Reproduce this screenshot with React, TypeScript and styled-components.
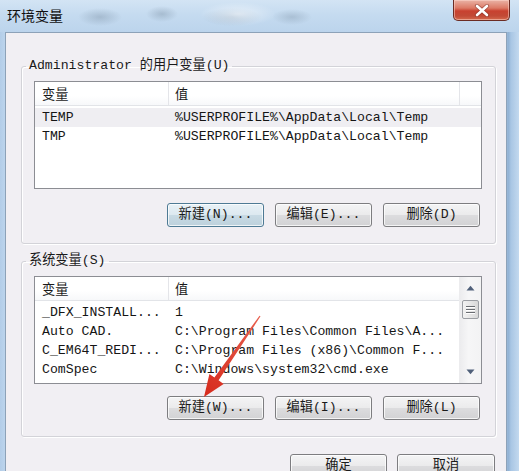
import React from 'react';
import styled, { createGlobalStyle } from 'styled-components';

const MONO = `"Liberation Mono", "Noto Sans CJK SC", monospace`;
const CJK = `"Noto Sans CJK SC", "Liberation Mono", sans-serif`;

const Global = createGlobalStyle`
  html, body { margin: 0; padding: 0; width: 519px; height: 471px; overflow: hidden; background: #fff; }
  #root { width: 519px; height: 471px; }
  * { box-sizing: border-box; }
`;

const Win = styled.div`
  position: relative;
  width: 519px;
  height: 471px;
  overflow: hidden;
  display: flex;
  flex-direction: column;
  background: linear-gradient(90deg, #b3cde8 0px, #bcd4ec 5px, #bcd4ec 505px, #8fb0d2 508px, #a9c6e4 511px, #c3d9ef 519px);
`;

const TitleBar = styled.div`
  height: 32px;
  flex: none;
  display: flex;
  align-items: flex-start;
  justify-content: space-between;
  padding: 0 9px 0 7px;
  background:
    radial-gradient(ellipse 22px 9px at 100px 17px, rgba(110, 130, 150, 0.35), transparent),
    radial-gradient(ellipse 16px 8px at 162px 14px, rgba(110, 130, 150, 0.35), transparent),
    radial-gradient(ellipse 38px 12px at 238px 14px, rgba(255, 255, 255, 0.55), transparent),
    radial-gradient(ellipse 30px 9px at 232px 17px, rgba(110, 130, 150, 0.3), transparent),
    radial-gradient(ellipse 20px 8px at 292px 17px, rgba(110, 130, 150, 0.3), transparent),
    linear-gradient(180deg, #d3e4f4 0%, #c5dbf0 45%, #bcd4ec 100%);
`;

const Title = styled.div`
  font: 14px/30px ${CJK};
  color: #111;
`;

const CloseBtn = styled.div`
  width: 57px;
  height: 21px;
  display: flex;
  align-items: center;
  justify-content: center;
  border: 1px solid #6b2c24;
  border-top: none;
  border-radius: 0 0 5px 5px;
  background: linear-gradient(180deg, #eab3a6 0%, #dc7a66 40%, #c8412f 55%, #c24a36 80%, #d46a4d 100%);
  box-shadow: inset 0 0 0 1px rgba(255, 220, 210, 0.5);
`;

const Client = styled.div`
  flex: 1;
  margin: 0 12px 0 5px;
  border: 1px solid #8da2b8;
  border-bottom: none;
  background: #f1eff3;
  display: flex;
  flex-direction: column;
  padding: 0 10px 0 15px;
`;

const Group = styled.fieldset<{ $top: number; $padTop: number }>`
  margin: ${p => p.$top}px 0 0 0;
  padding: ${p => p.$padTop}px 13px 16px 12px;
  border: 1px solid #d3d3d8;
  border-radius: 3px;
  box-shadow: inset 1px 1px 0 #fff, 1px 1px 0 #fff;
  min-inline-size: 0;
  display: flex;
  flex-direction: column;
`;

const Legend = styled.legend`
  padding: 0 3px;
  margin-left: -8px;
  font: 13.2px/16px ${MONO};
  color: #1a1a1a;
`;

const List = styled.div`
  height: 108px;
  border: 1px solid #8c8d93;
  background: #fff;
  display: flex;
`;

const ListMain = styled.div`
  flex: 1;
  min-width: 0;
  display: flex;
  flex-direction: column;
`;

const Header = styled.div<{ $cols: string }>`
  height: 24px;
  flex: none;
  display: grid;
  grid-template-columns: ${p => p.$cols};
  border-bottom: 1px solid #e2e4e8;
  background: linear-gradient(180deg, #ffffff 0%, #ffffff 60%, #f7f8fa 100%);
`;

const HeadCell = styled.div<{ $pad: number; $last?: boolean }>`
  padding-left: ${p => p.$pad}px;
  border-right: ${p => (p.$last ? 'none' : '1px solid #e4e5e9')};
  font: 13.2px/23px ${CJK};
  color: #1a1a1a;
  white-space: nowrap;
  overflow: hidden;
`;

const Rows = styled.div`
  padding-top: 2px;
  display: flex;
  flex-direction: column;
`;

const Row = styled.div<{ $sel?: boolean; $cols: string }>`
  height: 19px;
  display: grid;
  grid-template-columns: ${p => p.$cols};
  background: ${p => (p.$sel ? '#efeef2' : 'transparent')};
`;

const Cell = styled.div<{ $pad: number }>`
  padding-left: ${p => p.$pad}px;
  font: 13.2px/19px ${MONO};
  color: #151515;
  white-space: nowrap;
  overflow: hidden;
`;

const ScrollBar = styled.div`
  width: 22px;
  flex: none;
  display: flex;
  flex-direction: column;
  align-items: center;
  background: linear-gradient(90deg, #ececee 0%, #f6f6f7 40%, #f3f3f4 100%);
  border-left: 1px solid #ececee;
`;

const ArrowBox = styled.div`
  height: 22px;
  width: 100%;
  display: flex;
  align-items: center;
  justify-content: center;
`;

const Thumb = styled.div`
  width: 17px;
  height: 19px;
  margin-top: 1px;
  border: 1px solid #9b9ea3;
  border-radius: 2px;
  background: linear-gradient(90deg, #f2f2f2 0%, #e6e6e6 50%, #d8d8d8 100%);
  display: flex;
  flex-direction: column;
  align-items: center;
  justify-content: center;
  gap: 2px;
`;

const Grip = styled.div`
  width: 9px;
  height: 1px;
  background: #6a6d72;
  box-shadow: 0 1px 0 #fff;
`;

const Spacer = styled.div`
  flex: 1;
`;

const ButtonRow = styled.div<{ $top: number; $right: number }>`
  display: flex;
  justify-content: flex-end;
  gap: 11px;
  margin-top: ${p => p.$top}px;
  padding-right: ${p => p.$right}px;
`;

const Btn = styled.div<{ $default?: boolean; $w?: number }>`
  width: ${p => p.$w ?? 97}px;
  height: 24px;
  flex: none;
  border: 1px solid ${p => (p.$default ? '#4e7a94' : '#7d7d80')};
  border-radius: 3px;
  background: ${p =>
    p.$default
      ? 'linear-gradient(180deg, #e8f1f6 0%, #dde9f0 48%, #c8dae4 52%, #bdd1dc 100%)'
      : 'linear-gradient(180deg, #f4f4f5 0%, #ebebec 48%, #dcdcde 52%, #d2d2d4 100%)'};
  box-shadow: inset 0 0 0 1px rgba(255, 255, 255, 0.75);
  font: 13.2px/22px ${MONO};
  color: #1a1a1a;
  text-align: center;
  white-space: nowrap;
`;

const Footer = styled.div`
  display: flex;
  justify-content: flex-end;
  gap: 10px;
  margin-top: 17px;
  padding-right: 1px;
`;

const Overlay = styled.svg`
  position: absolute;
  left: 0;
  top: 0;
  width: 519px;
  height: 471px;
  pointer-events: none;
`;

const COLS1 = '134px 291px 1fr';
const COLS2 = '134px 1fr';

const upArrow = (
  <svg width="9" height="6" viewBox="0 0 9 6">
    <path d="M0.5 5.5 L4.5 0.8 L8.5 5.5 Z" fill="#50607a" />
  </svg>
);
const downArrow = (
  <svg width="9" height="6" viewBox="0 0 9 6">
    <path d="M0.5 0.5 L4.5 5.2 L8.5 0.5 Z" fill="#50607a" />
  </svg>
);

const userVars = [
  ['TEMP', '%USERPROFILE%\\AppData\\Local\\Temp'],
  ['TMP', '%USERPROFILE%\\AppData\\Local\\Temp'],
];

const sysVars = [
  ['_DFX_INSTALL...', '1'],
  ['Auto CAD.', 'C:\\Program Files\\Common Files\\A...'],
  ['C_EM64T_REDI...', 'C:\\Program Files (x86)\\Common F...'],
  ['ComSpec', 'C:\\Windows\\system32\\cmd.exe'],
];

export default function App() {
  return (
    <>
      <Global />
      <Win>
        <TitleBar>
          <Title>环境变量</Title>
          <CloseBtn>
            <svg width="16" height="13" viewBox="0 0 16 13">
              <path d="M3 2 L13 11 M13 2 L3 11" stroke="#7a2a22" strokeWidth="4.2" strokeLinecap="round" opacity="0.55" />
              <path d="M3 2 L13 11 M13 2 L3 11" stroke="#fff" strokeWidth="2.6" strokeLinecap="round" />
            </svg>
          </CloseBtn>
        </TitleBar>
        <Client>
          <Group $top={25} $padTop={7}>
            <Legend>Administrator 的用户变量(U)</Legend>
            <List>
              <ListMain>
                <Header $cols={COLS1}>
                  <HeadCell $pad={7}>变量</HeadCell>
                  <HeadCell $pad={6}>值</HeadCell>
                  <HeadCell $pad={0} $last />
                </Header>
                <Rows>
                  {userVars.map(([k, v], i) => (
                    <Row key={k} $cols="134px 291px" $sel={i === 0}>
                      <Cell $pad={7}>{k}</Cell>
                      <Cell $pad={6}>{v}</Cell>
                    </Row>
                  ))}
                </Rows>
              </ListMain>
            </List>
            <ButtonRow $top={14} $right={2}>
              <Btn $default>新建(N)...</Btn>
              <Btn>编辑(E)...</Btn>
              <Btn>删除(D)</Btn>
            </ButtonRow>
          </Group>
          <Group $top={9} $padTop={7}>
            <Legend>系统变量(S)</Legend>
            <List>
              <ListMain>
                <Header $cols={COLS2}>
                  <HeadCell $pad={7}>变量</HeadCell>
                  <HeadCell $pad={6} $last>值</HeadCell>
                </Header>
                <Rows>
                  {sysVars.map(([k, v]) => (
                    <Row key={k} $cols={COLS2}>
                      <Cell $pad={7}>{k}</Cell>
                      <Cell $pad={6}>{v}</Cell>
                    </Row>
                  ))}
                </Rows>
              </ListMain>
              <ScrollBar>
                <ArrowBox>{upArrow}</ArrowBox>
                <Thumb>
                  <Grip />
                  <Grip />
                  <Grip />
                </Thumb>
                <Spacer />
                <ArrowBox>{downArrow}</ArrowBox>
              </ScrollBar>
            </List>
            <ButtonRow $top={12} $right={2}>
              <Btn>新建(W)...</Btn>
              <Btn>编辑(I)...</Btn>
              <Btn>删除(L)</Btn>
            </ButtonRow>
          </Group>
          <Footer>
            <Btn $w={97}>确定</Btn>
            <Btn $w={98}>取消</Btn>
          </Footer>
        </Client>
        <Overlay viewBox="0 0 519 471">
          <defs>
            <linearGradient id="arrowGrad" x1="260" y1="316" x2="204" y2="397" gradientUnits="userSpaceOnUse">
              <stop offset="0" stopColor="#e8604f" />
              <stop offset="1" stopColor="#d62a1c" />
            </linearGradient>
          </defs>
          <polygon
            points="260.5,316.3 218.6,380.3 223.6,383.9 204,397 209.4,373.9 214.4,377.5 259.5,315.7"
            fill="url(#arrowGrad)"
          />
        </Overlay>
      </Win>
    </>
  );
}
